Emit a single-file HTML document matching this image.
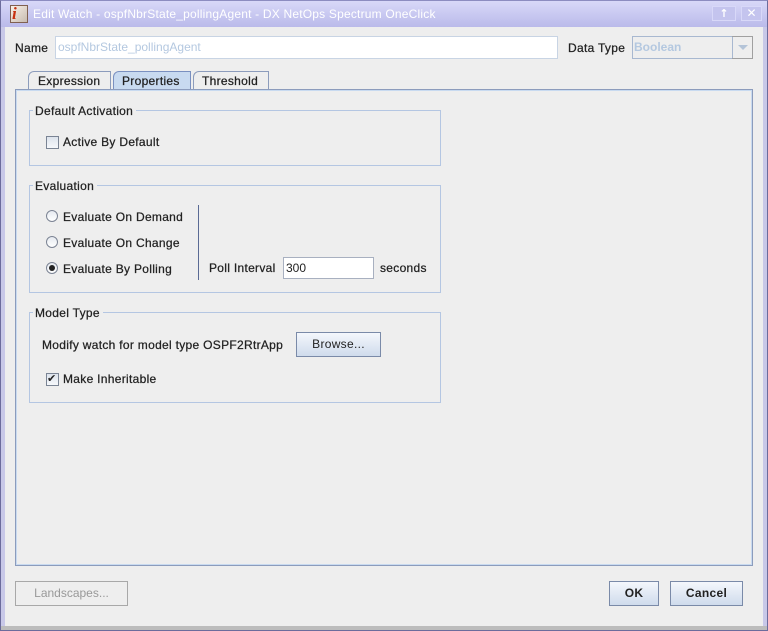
<!DOCTYPE html>
<html><head><style>
*{box-sizing:border-box;margin:0;padding:0}
body{width:768px;height:631px;overflow:hidden;background:#eeeeee;font-family:"Liberation Sans",sans-serif;font-size:12px;color:#222;position:relative}
.a{position:absolute;white-space:nowrap}
.t{position:absolute;white-space:nowrap;line-height:14px;letter-spacing:0.3px;-webkit-text-stroke:0.25px #222}
.grp{position:absolute;border:1px solid #b4c6e2}
.gl{position:absolute;background:#eeeeee;padding:0 3px 0 2px;line-height:14px;letter-spacing:0.3px;-webkit-text-stroke:0.25px #222}
.btn{position:absolute;border:1px solid #7a8aa8;background:linear-gradient(#f4f7fc,#cfdbec);text-align:center;line-height:22px;letter-spacing:0.3px}
.radio{position:absolute;width:12px;height:12px;border-radius:50%;border:1px solid #7c8494;background:linear-gradient(#e6eaf0,#fff)}
.cb{position:absolute;width:13px;height:13px;border:1px solid #7a8494;background:linear-gradient(#dde3ec,#f6f8fb)}
</style></head><body>
<div class="a" style="left:0;top:0;width:768px;height:631px;border:1px solid #6c6c9c;border-top-color:#8c8cc0"></div>
<div class="a" style="left:1px;top:1px;width:766px;height:26px;background:linear-gradient(#d8d8f8,#babaea)"></div>
<div class="a" style="left:1px;top:27px;width:4px;height:600px;background:#c8c8e8"></div>
<div class="a" style="left:763px;top:27px;width:4px;height:600px;background:#c8c8e8"></div>
<div class="a" style="left:1px;top:626px;width:766px;height:4px;background:#bcbcbc"></div>
<div class="a" style="left:10px;top:5px;width:18px;height:18px;background:linear-gradient(135deg,#f8f0e8,#c8bcb0);border:1px solid #806050"></div>
<div class="a" style="left:12px;top:4px;font:bold italic 17px 'Liberation Serif',serif;color:#c83010">i</div>
<div class="a" style="left:33px;top:7px;color:#fff;font-size:12px;line-height:14px;letter-spacing:0.2px">Edit Watch - ospfNbrState_pollingAgent - DX NetOps Spectrum OneClick</div>
<div class="a" style="left:712px;top:6px;width:24px;height:15px;border:1px solid #d8d8f8;background:#c4c4ee;color:#fff;text-align:center;font:bold 11px/13px 'DejaVu Sans',sans-serif">↑</div>
<div class="a" style="left:741px;top:6px;width:21px;height:15px;border:1px solid #d8d8f8;background:#c4c4ee;color:#fff;text-align:center;font:bold 12px/13px 'DejaVu Sans',sans-serif">✕</div>
<div class="t" style="left:15px;top:41px">Name</div>
<div class="a" style="left:55px;top:36px;width:503px;height:23px;background:#fff;border:1px solid #c8d4e4"></div>
<div class="a" style="left:58px;top:40px;color:#b4c8e0;line-height:14px">ospfNbrState_pollingAgent</div>
<div class="t" style="left:568px;top:41px">Data Type</div>
<div class="a" style="left:632px;top:36px;width:101px;height:23px;border:1px solid #a8b8d0;background:#eeeeee"></div>
<div class="a" style="left:634px;top:40px;color:#b4c8e0;font-weight:bold;line-height:14px">Boolean</div>
<div class="a" style="left:732px;top:36px;width:21px;height:23px;border:1px solid #a0a0a0;border-left:none"></div>
<div class="a" style="left:738px;top:45px;width:0;height:0;border-left:5px solid transparent;border-right:5px solid transparent;border-top:5px solid #b4c4d8"></div>
<div class="a" style="left:28px;top:71px;width:83px;height:19px;border:1px solid #8c9cbc;border-bottom:none;border-radius:6px 0 0 0;background:#eeeeee"></div>
<div class="t" style="left:38px;top:74px">Expression</div>
<div class="a" style="left:113px;top:71px;width:78px;height:19px;border:1px solid #7a90c0;border-bottom:none;border-radius:6px 0 0 0;background:#c8daf0"></div>
<div class="t" style="left:122px;top:74px">Properties</div>
<div class="a" style="left:193px;top:71px;width:76px;height:19px;border:1px solid #8c9cbc;border-bottom:none;border-radius:6px 0 0 0;background:#eeeeee"></div>
<div class="t" style="left:202px;top:74px">Threshold</div>
<div class="a" style="left:15px;top:89px;width:738px;height:477px;border:1px solid #8c9cbc"></div>
<div class="a" style="left:16px;top:90px;width:736px;height:475px;border:1px solid #c8daf0"></div>
<div class="grp" style="left:29px;top:110px;width:412px;height:56px"></div>
<div class="gl" style="left:33px;top:104px">Default Activation</div>
<div class="cb" style="left:46px;top:136px"></div>
<div class="t" style="left:63px;top:135px">Active By Default</div>
<div class="grp" style="left:29px;top:185px;width:412px;height:108px"></div>
<div class="gl" style="left:33px;top:179px">Evaluation</div>
<div class="radio" style="left:46px;top:210px"></div>
<div class="t" style="left:63px;top:210px">Evaluate On Demand</div>
<div class="radio" style="left:46px;top:236px"></div>
<div class="t" style="left:63px;top:236px">Evaluate On Change</div>
<div class="radio" style="left:46px;top:262px"></div>
<div class="a" style="left:49px;top:265px;width:6px;height:6px;border-radius:50%;background:#222"></div>
<div class="t" style="left:63px;top:262px">Evaluate By Polling</div>
<div class="a" style="left:198px;top:205px;width:1px;height:75px;background:#5a6a94"></div>
<div class="t" style="left:209px;top:261px">Poll Interval</div>
<div class="a" style="left:283px;top:257px;width:91px;height:22px;background:#fff;border:1px solid #a8b0c0"></div>
<div class="a" style="left:286px;top:261px;line-height:14px">300</div>
<div class="t" style="left:380px;top:261px">seconds</div>
<div class="grp" style="left:29px;top:312px;width:412px;height:91px"></div>
<div class="gl" style="left:33px;top:306px">Model Type</div>
<div class="t" style="left:42px;top:338px">Modify watch for model type OSPF2RtrApp</div>
<div class="btn" style="left:296px;top:332px;width:85px;height:25px">Browse...</div>
<div class="cb" style="left:46px;top:373px"></div>
<div class="a" style="left:47px;top:372px;font:bold 11px/14px 'DejaVu Sans',sans-serif;color:#222">✔</div>
<div class="t" style="left:63px;top:372px">Make Inheritable</div>
<div class="a" style="left:15px;top:581px;width:113px;height:25px;border:1px solid #a8a8a8;text-align:center;line-height:23px;color:#999">Landscapes...</div>
<div class="btn" style="left:609px;top:581px;width:50px;height:25px;font-weight:bold">OK</div>
<div class="btn" style="left:670px;top:581px;width:73px;height:25px;font-weight:bold">Cancel</div>
</body></html>
